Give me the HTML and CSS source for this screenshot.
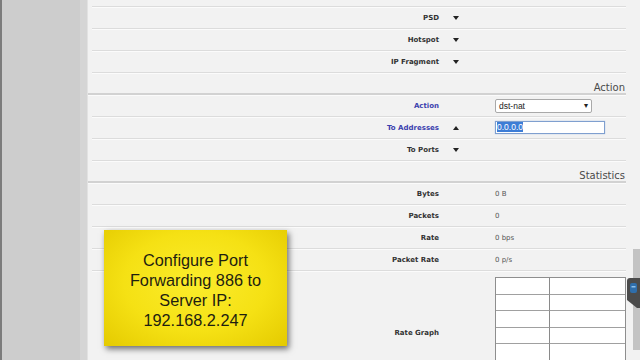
FILE: index.html
```html
<!DOCTYPE html>
<html lang="en">
<head>
    <meta charset="UTF-8">
    <title>Firewall NAT Rule</title>
    <link rel="stylesheet" href="styles.css">
</head>
<body>

    <div class="sidebar"></div>

    <div class="main">
        <div class="form">
            <div class="row"><div class="label"></div></div>
            <div class="row">
                <div class="label">PSD</div>
                <div class="toggle"><span class="tri down"></span></div>
            </div>
            <div class="row">
                <div class="label">Hotspot</div>
                <div class="toggle"><span class="tri down"></span></div>
            </div>
            <div class="row">
                <div class="label">IP Fragment</div>
                <div class="toggle"><span class="tri down"></span></div>
            </div>

            <!-- Action section -->
            <div class="section">Action</div>
            <div class="row">
                <div class="label active">Action</div>
                <div class="toggle"></div>
                <div class="value">
                    <div class="select">
                        <span>dst-nat</span>
                        <span class="select-arrow">&#9662;</span>
                    </div>
                </div>
            </div>
            <div class="row">
                <div class="label active">To Addresses</div>
                <div class="toggle"><span class="tri up"></span></div>
                <div class="value">
                    <div class="input"><span class="selected">0.0.0.0</span></div>
                </div>
            </div>
            <div class="row">
                <div class="label">To Ports</div>
                <div class="toggle"><span class="tri down"></span></div>
            </div>

            <!-- Statistics section -->
            <div class="section">Statistics</div>
            <div class="row">
                <div class="label">Bytes</div>
                <div class="toggle"></div>
                <div class="value">0 B</div>
            </div>
            <div class="row">
                <div class="label">Packets</div>
                <div class="toggle"></div>
                <div class="value">0</div>
            </div>
            <div class="row">
                <div class="label">Rate</div>
                <div class="toggle"></div>
                <div class="value">0 bps</div>
            </div>
            <div class="row">
                <div class="label">Packet Rate</div>
                <div class="toggle"></div>
                <div class="value">0 p/s</div>
            </div>
            <div class="row graph-row">
                <div class="label">Rate Graph</div>
                <div class="toggle"></div>
                <div class="value">
                    <div class="graph">
                        <div></div><div></div>
                        <div></div><div></div>
                        <div></div><div></div>
                        <div></div><div></div>
                        <div></div><div></div>
                        <div></div><div></div>
                    </div>
                </div>
            </div>
        </div>
    </div>

    <!-- video caption -->
    <div class="note">
        Configure Port<br>
        Forwarding 886 to<br>
        Server IP:<br>
        192.168.2.247
    </div>

    <!-- side handle -->
    <div class="scroll-bar"></div>
    <svg class="handle" width="13" height="30" viewBox="0 0 13 30">
        <path d="M3 0 H13 V30 H10 L0 22 V3 Q0 0 3 0 Z" fill="#4b4b4b"/>
        <rect x="3" y="5" width="7" height="10" rx="2" fill="#2f6eab"/>
        <rect x="4.5" y="8" width="4" height="1.5" fill="#8fc0ea"/>
    </svg>

</body>
</html>
```

FILE: styles.css
```css
body {
    margin: 0;
    width: 640px;
    height: 360px;
    overflow: hidden;
    display: flex;
    background-color: #f2f2f2;
    font-family: "DejaVu Sans", Verdana, sans-serif;
    position: relative;
}

.sidebar {
    width: 78px;
    flex-shrink: 0;
    background-color: #cdcdcd;
    border-left: 2px solid #7c7c7c;
    border-right: 7px solid #d5d5d5;
    box-shadow: 1px 0 0 #e2e2e2;
}

.main {
    flex: 1;
    padding: 0 15px 0 5px;
}

.form {
    margin-top: -15px;
}

.row {
    display: grid;
    grid-template-columns: 347px 55px 1fr;
    align-items: center;
    height: 21px;
    border-bottom: 1px solid #dcdcdc;
    box-shadow: 0 1px 0 #fbfbfb;
}

.label {
    text-align: right;
    font-size: 7px;
    font-weight: bold;
    color: #333;
}

.label.active {
    color: #3b3fae;
}

.toggle {
    padding-left: 14px;
    display: flex;
    align-items: center;
}

.tri {
    width: 0;
    height: 0;
    border-left: 3px solid transparent;
    border-right: 3px solid transparent;
}

.tri.down {
    border-top: 4px solid #222;
}

.tri.up {
    border-bottom: 4px solid #222;
}

.value {
    font-size: 7px;
    color: #555;
    padding-left: 1px;
}

.section {
    height: 20px;
    margin-left: -4px;
    padding-right: 1px;
    text-align: right;
    font-size: 10px;
    line-height: 30px;
    color: #4a4a4a;
    border-bottom: 2px solid #d2d2d2;
    box-shadow: 0 1px 0 #fbfbfb;
}

.select {
    width: 89px;
    height: 12px;
    padding: 0 3px;
    display: flex;
    justify-content: space-between;
    align-items: center;
    background-color: #fff;
    border: 1px solid #a9a9a9;
    border-radius: 2px;
    font-family: "Liberation Sans", Arial, sans-serif;
    font-size: 8.5px;
    color: #222;
}

.select-arrow {
    font-size: 8px;
}

.input {
    width: 106px;
    height: 11px;
    padding: 0 1px;
    background-color: #fff;
    border: 1px solid #7f9fcf;
    box-shadow: 0 0 1px #9cb8e0;
    font-family: "Liberation Sans", Arial, sans-serif;
    font-size: 8.5px;
    line-height: 11px;
}

.selected {
    background-color: #3d7dd6;
    color: #fff;
}

.graph-row {
    height: 110px;
    align-items: start;
    padding-top: 6px;
    border-bottom: none;
    box-shadow: none;
}

.graph-row .label {
    margin-top: 52px;
}

.graph {
    width: 129px;
    display: grid;
    grid-template-columns: 54px 1fr;
    grid-auto-rows: 16.5px;
    background-color: #fff;
    border: 1px solid #8e8e8e;
}

.graph div {
    border-bottom: 1px solid #a0a0a0;
}

.graph div:nth-child(odd) {
    border-right: 1px solid #8a8a8a;
}

.note {
    position: absolute;
    left: 104px;
    top: 230px;
    width: 183px;
    height: 116px;
    box-sizing: border-box;
    padding-top: 20px;
    text-align: center;
    font-family: "Liberation Sans", Arial, sans-serif;
    font-size: 16.3px;
    line-height: 20px;
    color: #1e1e10;
    background: radial-gradient(ellipse at 50% 45%, #fbec2c 0%, #f5e114 55%, #e4ca00 100%);
    box-shadow: 2px 3px 6px rgba(0, 0, 0, 0.55);
}

.scroll-bar {
    position: absolute;
    left: 633px;
    top: 249px;
    width: 7px;
    height: 101px;
    background-color: #c3c3c3;
}

.handle {
    position: absolute;
    left: 627px;
    top: 278px;
}
```
